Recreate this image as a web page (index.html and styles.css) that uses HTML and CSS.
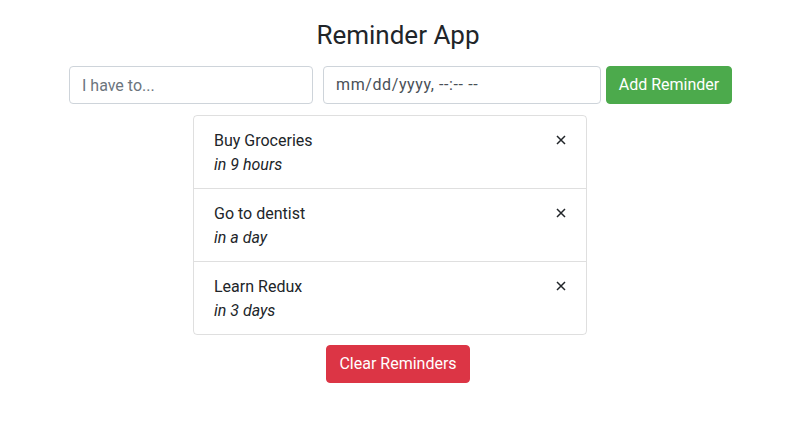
FILE: index.html
```html
<!DOCTYPE html>
<html>
<head>
<meta charset="utf-8">
<link rel="stylesheet" href="styles.css">
</head>
<body>
<div class="app">
  <h3 class="title">Reminder App</h3>
  <div class="form-row">
    <input class="field field-task" type="text" placeholder="I have to...">
    <div class="field field-date">mm/dd/yyyy, --:-- --</div>
    <button class="btn btn-success">Add Reminder</button>
  </div>
  <ul class="list">
    <li class="item">
      <div class="item-body">
        <div class="item-text">Buy Groceries</div>
        <div class="item-time">in 9 hours</div>
      </div>
      <span class="delete"><svg width="10" height="10" viewBox="0 0 10 10"><path d="M1 1L9 9M9 1L1 9" stroke="#212529" stroke-width="1.5" fill="none"/></svg></span>
    </li>
    <li class="item">
      <div class="item-body">
        <div class="item-text">Go to dentist</div>
        <div class="item-time">in a day</div>
      </div>
      <span class="delete"><svg width="10" height="10" viewBox="0 0 10 10"><path d="M1 1L9 9M9 1L1 9" stroke="#212529" stroke-width="1.5" fill="none"/></svg></span>
    </li>
    <li class="item">
      <div class="item-body">
        <div class="item-text">Learn Redux</div>
        <div class="item-time">in 3 days</div>
      </div>
      <span class="delete"><svg width="10" height="10" viewBox="0 0 10 10"><path d="M1 1L9 9M9 1L1 9" stroke="#212529" stroke-width="1.5" fill="none"/></svg></span>
    </li>
  </ul>
  <button class="btn btn-danger">Clear Reminders</button>
</div>
</body>
</html>
```

FILE: styles.css
```css
* { box-sizing: border-box; }
body {
  margin: 0;
  background: #fff;
  font-family: Roboto, "Liberation Sans", sans-serif;
  font-size: 16px;
  line-height: 1.5;
  color: #212529;
}
.app {
  width: 796px;
  display: flex;
  flex-direction: column;
  align-items: center;
}
.title {
  margin: 20px 0 15px;
  font-size: 26px;
  font-weight: 400;
  line-height: 1.2;
}
.form-row {
  display: flex;
  align-items: center;
  margin-left: 5px;
}
.field {
  height: 38px;
  padding: 6px 12px;
  font-family: inherit;
  font-size: 16px;
  line-height: 24px;
  color: #495057;
  background: #fff;
  border: 1px solid #ced4da;
  border-radius: 4px;
}
.field::placeholder { color: #6c757d; }
.field-task { width: 244px; margin-right: 10px; }
.field-date { width: 278px; margin-right: 5px; letter-spacing: 0.6px; white-space: nowrap; }
.btn {
  height: 38px;
  padding: 6px 0;
  font-family: inherit;
  font-size: 16px;
  line-height: 24px;
  color: #fff;
  border: 1px solid transparent;
  border-radius: 4px;
  white-space: nowrap;
  text-align: center;
}
.btn-success { background: #4caa4c; border-color: #4caa4c; width: 126px; }
.btn-danger { background: #dc3545; border-color: #dc3545; width: 144px; }
.list {
  list-style: none;
  margin: 11px 16px 10px 0;
  padding: 0;
  width: 394px;
  border: 1px solid rgba(0,0,0,.125);
  border-radius: 4px;
}
.item {
  display: flex;
  justify-content: space-between;
  align-items: flex-start;
  padding: 13px 20px 11px;
}
.item + .item { border-top: 1px solid rgba(0,0,0,.125); }
.item-time { font-style: italic; }
.delete {
  display: flex;
  margin-top: 6px;
}
```
